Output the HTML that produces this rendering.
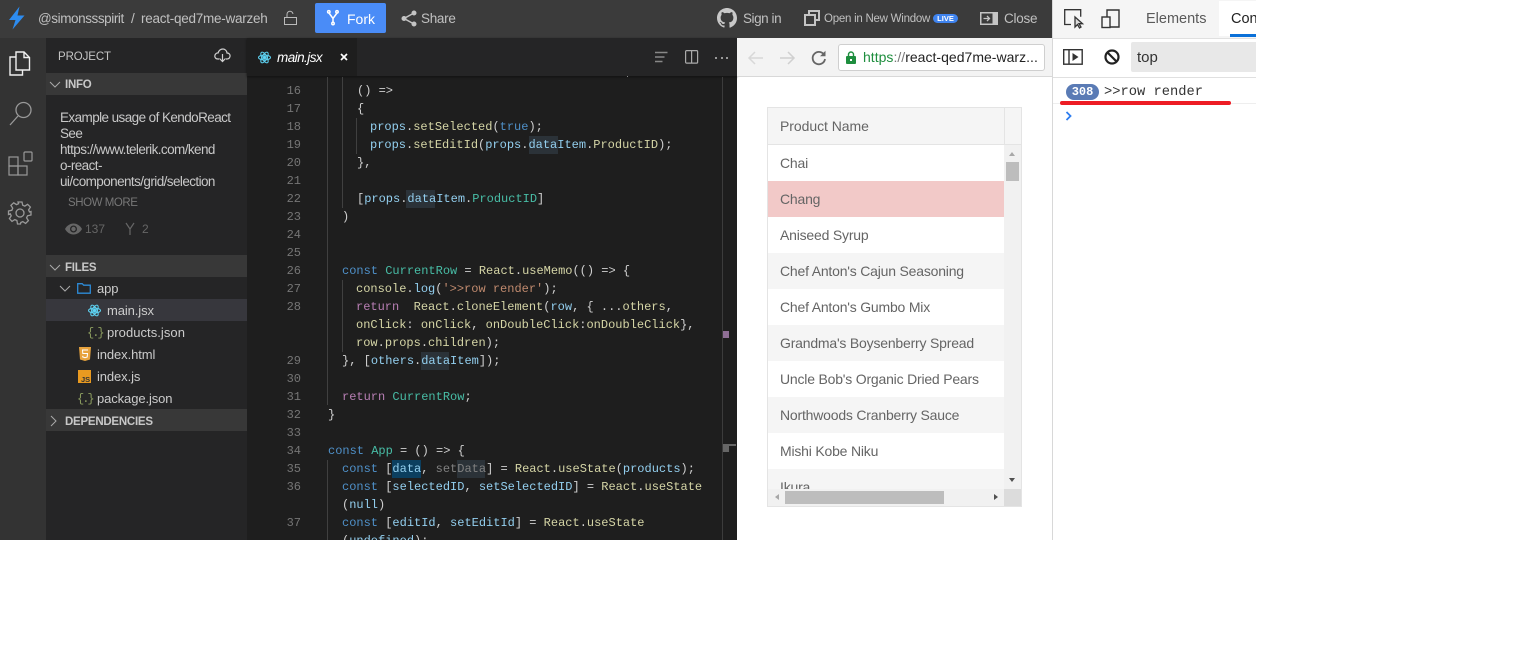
<!DOCTYPE html>
<html><head><meta charset="utf-8">
<style>
html,body{margin:0;padding:0;background:#fff;width:1536px;height:648px;overflow:hidden}
#r{position:relative;width:1536px;height:648px;overflow:hidden;font-family:"Liberation Sans",sans-serif}
.a{position:absolute;white-space:nowrap}
.h{top:0;height:38px;line-height:38px;color:#c0c0c0;font-size:13.5px;letter-spacing:-.2px}
.sb{left:46px;width:201px;height:22px;background:#383838}
.st{left:65px;color:#c8c8c8;font-size:11.5px;font-weight:bold;height:22px;line-height:22px;letter-spacing:-.25px}
.t{color:#cccccc;font-size:13px;line-height:22px;height:22px;letter-spacing:-.1px}
.d{left:60px;color:#c8c8c8;font-size:13.5px;line-height:16px;letter-spacing:-.58px}
.ln{left:247px;width:54px;text-align:right;font:12px/18px "Liberation Mono",monospace;color:#757575}
.c{font:12px/18px "Liberation Mono",monospace;color:#d0d0d0;white-space:pre;position:absolute}
.k{color:#4f90c8}.r{color:#b87fb4}.v{color:#93cfef}.f{color:#d5d5a6}.g{color:#48bda6}.s{color:#c08a6e}.b{color:#4f90c8}.u{color:#808080}
.w{background:#2b3238}
.row{left:768px;width:236px;height:36px;line-height:36px;color:#656565;font-size:14px;text-indent:12px;letter-spacing:-.2px}
.e{background:#f5f5f5}
.j{color:#8b9c5f;font:12px/22px "Liberation Mono",monospace;letter-spacing:-2px;height:22px}
svg{position:absolute;overflow:visible}
</style></head><body><div id="r">

<!-- top bar -->
<div class="a" style="left:0;top:0;width:1052px;height:38px;background:#3b3b3b"></div>
<svg style="left:8px;top:6px" width="18" height="24" viewBox="0 0 18 24"><path d="M11.5 .5 L1 14 L7.5 14 L4.5 23.5 L16.5 9.5 L9.5 9.5Z" fill="#2d8cf0"/></svg>
<div class="a h" style="left:38px;letter-spacing:-.42px">@simonssspirit</div>
<div class="a h" style="left:131px">/</div>
<div class="a h" style="left:141px;letter-spacing:-.25px">react-qed7me-warzeh</div>
<svg style="left:284px;top:11px" width="13" height="14" fill="none" stroke="#bbb" stroke-width="1"><rect x=".5" y="6.5" width="12" height="7"/><path d="M3 6.5V3.5a3 3 0 0 1 6-.5"/></svg>
<div class="a" style="left:315px;top:3px;width:71px;height:30px;background:#4a8cf7;border-radius:2px"></div>
<svg style="left:327px;top:10px" width="12" height="16" fill="none" stroke="#fff" stroke-width="1.5"><circle cx="1.8" cy="1.8" r="1.2"/><circle cx="10" cy="1.8" r="1.2"/><circle cx="6" cy="13.5" r="1.2"/><path d="M2 3l4 5.5 4-5.500M6 8.5v3.5"/></svg>
<div class="a h" style="left:347px;color:#fff;font-size:14px;letter-spacing:0">Fork</div>
<svg style="left:401px;top:10px" width="16" height="17" fill="#c4c4c4" stroke="#c4c4c4"><circle cx="13" cy="3" r="2"/><circle cx="13" cy="14" r="2"/><circle cx="3" cy="8.5" r="2"/><path d="M13 3L3 8.5 13 14" fill="none" stroke-width="1.5"/></svg>
<div class="a h" style="left:421px;letter-spacing:-.3px">Share</div>
<svg style="left:717px;top:8px" width="20" height="20" viewBox="0 0 16 16"><path fill="#c8c8c8" d="M8 0C3.58 0 0 3.58 0 8c0 3.54 2.29 6.53 5.47 7.59.4.07.55-.17.55-.38v-1.34c-2.23.48-2.7-1.08-2.7-1.08-.36-.93-.89-1.17-.89-1.17-.73-.5.05-.49.05-.49.8.06 1.23.83 1.23.83.71 1.22 1.87.87 2.33.66.07-.52.28-.87.51-1.07-1.78-.2-3.64-.89-3.64-3.95 0-.87.31-1.58.82-2.14-.08-.2-.36-1.02.08-2.12 0 0 .67-.21 2.2.82a7.6 7.6 0 0 1 4 0c1.53-1.04 2.2-.82 2.2-.82.44 1.1.16 1.92.08 2.12.51.56.82 1.27.82 2.14 0 3.07-1.87 3.75-3.65 3.95.29.25.54.74.54 1.5v2.22c0 .21.15.46.55.38A8 8 0 0 0 16 8c0-4.42-3.58-8-8-8z"/></svg>
<div class="a h" style="left:743px;letter-spacing:-.45px">Sign in</div>
<svg style="left:804px;top:10px" width="16" height="16" fill="none" stroke="#c4c4c4" stroke-width="2"><rect x="5" y="1" width="10" height="9"/><rect x="1" y="5" width="10" height="10" fill="#3b3b3b"/></svg>
<div class="a h" style="left:824px;font-size:11.5px;letter-spacing:-.25px">Open in New Window</div>
<div class="a" style="left:933px;top:14px;width:25px;height:9px;line-height:9px;border-radius:5px;background:#3f83ee;color:#fff;font-size:7.5px;font-weight:bold;text-align:center">LIVE</div>
<svg style="left:980px;top:12px" width="18" height="13"><rect width="18" height="13" fill="#c4c4c4"/><rect x="1.5" y="1.5" width="11" height="10" fill="#3b3b3b"/><path d="M3.5 6.5H9M7 4l2.5 2.5L7 9" fill="none" stroke="#c4c4c4" stroke-width="1.3"/></svg>
<div class="a h" style="left:1004px;letter-spacing:-.25px">Close</div>

<!-- activity bar -->
<div class="a" style="left:0;top:38px;width:46px;height:502px;background:#333"></div>
<svg style="left:9px;top:51px" width="22" height="25" fill="none" stroke="#f0f0f0" stroke-width="1.4"><path d="M7 1h8l5.500 5.500V19H7z"/><path d="M15 1v5.500h5.500"/><path d="M7 6H1v18h12.500v-5"/></svg>
<svg style="left:9px;top:101px" width="24" height="25" fill="none" stroke="#999" stroke-width="1.3"><circle cx="14.5" cy="9" r="7.5"/><path d="M9 15L1 24"/></svg>
<svg style="left:8px;top:151px" width="24" height="24" fill="none" stroke="#999" stroke-width="1.2"><rect x="1" y="6" width="9" height="9"/><rect x="1" y="15" width="9" height="9"/><rect x="10" y="15" width="9" height="9"/><rect x="16" y="1" width="8" height="9" rx="1"/></svg>
<svg style="left:8px;top:201px" width="24" height="24" viewBox="0 0 24 24" fill="none" stroke="#999" stroke-width="1.3"><circle cx="12" cy="12" r="4"/><path d="M10 1h4l.7 3.200 2.100.9 2.800-1.800 2.800 2.800-1.800 2.800.9 2.100L23 10.500v3.500l-3.500.8-.9 2 1.800 2.800-2.800 2.800-2.800-1.800-2 .9L12.500 23h-3l-.6-3.500-2.100-.9-2.800 1.800-2.600-2.800 1.800-2.800-.9-2L.5 13.500v-3.500l3.300-.7.9-2.100-1.800-2.800 2.800-2.600 2.800 1.800 2.100-.9z"/></svg>

<!-- sidebar -->
<div class="a" style="left:46px;top:38px;width:201px;height:502px;background:#252526"></div>
<div class="a" style="left:58px;top:49px;color:#c4c4c4;font-size:11.5px;line-height:16px;letter-spacing:-.1px">PROJECT</div>
<svg style="left:214px;top:48px" width="17" height="15" fill="none" stroke="#d0d0d0" stroke-width="1.2"><path d="M5 11H4C1 11 .5 8.500 1 7s2-2.300 3-2C5 2 7 1 9 1s4 2 4 4c2 0 3.500 1.500 3 3.500S14 11 13 11h-1"/><path d="M8.500 6v8M5.500 10.500l3 3 3-3"/></svg>
<div class="a sb" style="top:73px"></div>
<svg style="left:50px;top:82px" width="10" height="6" fill="none" stroke="#aaa"><path d="M0 0l5 5 5-5"/></svg>
<div class="a st" style="top:74px">INFO</div>
<div class="a d" style="top:110px">Example usage of KendoReact<br>See<br>https://www.telerik.com/kend<br>o-react-<br>ui/components/grid/selection</div>
<div class="a" style="left:68px;top:196px;color:#777;font-size:11.5px;line-height:14px;letter-spacing:-.45px">SHOW MORE</div>
<svg style="left:65px;top:223px" width="17" height="12" fill="#666"><path d="M0 6C2 2.500 5 .5 8.500 .5S15 2.500 17 6c-2 3.500-5 5.500-8.500 5.500S2 9.500 0 6z"/><circle cx="8.5" cy="6" r="3.5" fill="#252526"/><circle cx="8.5" cy="6" r="2.2"/></svg>
<div class="a" style="left:85px;top:221px;color:#666;font-size:12px;line-height:16px">137</div>
<svg style="left:125px;top:222px" width="10" height="14" fill="none" stroke="#666" stroke-width="1.2"><path d="M1 1l4 6 4-6M5 7v6"/></svg>
<div class="a" style="left:142px;top:221px;color:#666;font-size:12px;line-height:16px">2</div>

<div class="a sb" style="top:255px"></div>
<svg style="left:50px;top:265px" width="10" height="6" fill="none" stroke="#aaa"><path d="M0 0l5 5 5-5"/></svg>
<div class="a st" style="top:257px">FILES</div>
<svg style="left:60px;top:286px" width="10" height="6" fill="none" stroke="#aaa"><path d="M0 0l5 5 5-5"/></svg>
<svg style="left:77px;top:283px" width="14" height="11" fill="none" stroke="#2d8ad6" stroke-width="1.3"><path d="M.7 .7h4.500l1.500 1.500h6.600v8h-12.600z"/></svg>
<div class="a t" style="left:97px;top:278px">app</div>
<div class="a" style="left:46px;top:299px;width:201px;height:22px;background:#37373d"></div>
<svg style="left:88px;top:304px" width="13" height="13" viewBox="0 0 26 26" fill="none" stroke="#5ed3f3" stroke-width="2"><circle cx="13" cy="13" r="2.5" fill="#5ed3f3"/><ellipse cx="13" cy="13" rx="12" ry="5"/><ellipse cx="13" cy="13" rx="12" ry="5" transform="rotate(60 13 13)"/><ellipse cx="13" cy="13" rx="12" ry="5" transform="rotate(120 13 13)"/></svg>
<div class="a t" style="left:107px;top:300px">main.jsx</div>
<div class="a j" style="left:87px;top:322px">{.}</div>
<div class="a t" style="left:107px;top:322px;letter-spacing:.05px">products.json</div>
<svg style="left:79px;top:347px" width="12" height="14"><path d="M0 0h12l-1 12.500L6 14l-5-1.500z" fill="#e8a33d"/><path d="M9 3H3.500l.3 3.500H8.500l-.3 3.500-2.200.7-2.200-.7-.1-1.200" fill="none" stroke="#fff" stroke-width="1"/></svg>
<div class="a t" style="left:97px;top:344px">index.html</div>
<div class="a" style="left:78px;top:370px;width:13px;height:13px;background:#e99a20"></div>
<div class="a" style="left:81px;top:376px;color:#333;font-size:7.5px;font-weight:bold;line-height:8px">JS</div>
<div class="a t" style="left:97px;top:366px">index.js</div>
<div class="a j" style="left:77px;top:388px">{.}</div>
<div class="a t" style="left:97px;top:388px">package.json</div>
<div class="a sb" style="top:409px"></div>
<svg style="left:51px;top:416px" width="6" height="10" fill="none" stroke="#aaa"><path d="M0 0l5 5-5 5"/></svg>
<div class="a st" style="top:411px">DEPENDENCIES</div>

<!-- editor -->
<div class="a" style="left:247px;top:38px;width:490px;height:502px;background:#1e1e1e;overflow:hidden"></div>
<div class="a" style="left:247px;top:38px;width:490px;height:38px;background:#252526;box-shadow:0 1px 2px #111"></div>
<div class="a" style="left:247px;top:38px;width:110px;height:38px;background:#1e1e1e"></div>
<svg style="left:258px;top:51px" width="13" height="13" viewBox="0 0 26 26" fill="none" stroke="#5ed3f3" stroke-width="2"><circle cx="13" cy="13" r="2.5" fill="#5ed3f3"/><ellipse cx="13" cy="13" rx="12" ry="5"/><ellipse cx="13" cy="13" rx="12" ry="5" transform="rotate(60 13 13)"/><ellipse cx="13" cy="13" rx="12" ry="5" transform="rotate(120 13 13)"/></svg>
<div class="a" style="left:277px;top:49px;color:#fff;font-size:13.5px;font-style:italic;line-height:17px;letter-spacing:-.55px">main.jsx</div>
<svg style="left:340px;top:53px" width="8" height="8" stroke="#fff" stroke-width="1.7"><path d="M1 1l6 6M7 1l-6 6"/></svg>
<svg style="left:654px;top:51px" width="14" height="12" stroke="#888" stroke-width="1.5"><path d="M1 1.500h12.500M1 6h9.500M1 10.500h7.500"/></svg>
<svg style="left:685px;top:50px" width="14" height="14" fill="none" stroke="#aaa" stroke-width="1.2"><rect x=".6" y=".6" width="12" height="12.500" rx="1"/><path d="M6.600 .6v12.500"/></svg>
<div class="a" style="left:715px;top:57px;width:2px;height:2px;background:#999;box-shadow:6px 0 #999,11px 0 #999"></div>
<div class="a" style="left:627px;top:76px;width:1px;height:1px;background:#888"></div>

<!-- indent guides -->
<div class="a" style="left:327px;top:77px;width:1px;height:328px;background:#404040"></div>
<div class="a" style="left:327px;top:460px;width:1px;height:80px;background:#404040"></div>
<div class="a" style="left:342px;top:77px;width:1px;height:131px;background:#404040"></div>
<div class="a" style="left:356px;top:118px;width:1px;height:36px;background:#404040"></div>
<div class="a" style="left:342px;top:280px;width:1px;height:72px;background:#404040"></div>
<div class="a" style="left:722px;top:77px;width:1px;height:463px;background:#3c3c3c"></div>
<div class="a" style="left:723px;top:331px;width:6px;height:7px;background:#8f6f95"></div>
<div class="a" style="left:723px;top:444px;width:6px;height:8px;background:#666"></div>
<div class="a" style="left:729px;top:444px;width:7px;height:2px;background:#666"></div>

<!-- word highlights -->
<div class="a w" style="left:529px;top:136px;width:29px;height:18px"></div>
<div class="a w" style="left:406px;top:190px;width:29px;height:18px"></div>
<div class="a w" style="left:421px;top:352px;width:28px;height:18px"></div>
<div class="a" style="left:392px;top:460px;width:29px;height:18px;background:#0c3f5f"></div>
<div class="a w" style="left:457px;top:460px;width:28px;height:18px"></div>

<!-- line numbers -->
<div class="a ln" style="top:82px">16</div><div class="a ln" style="top:100px">17</div><div class="a ln" style="top:118px">18</div><div class="a ln" style="top:136px">19</div><div class="a ln" style="top:154px">20</div><div class="a ln" style="top:172px">21</div><div class="a ln" style="top:190px">22</div><div class="a ln" style="top:208px">23</div><div class="a ln" style="top:226px">24</div><div class="a ln" style="top:244px">25</div><div class="a ln" style="top:262px">26</div><div class="a ln" style="top:280px">27</div><div class="a ln" style="top:298px">28</div><div class="a ln" style="top:352px">29</div><div class="a ln" style="top:370px">30</div><div class="a ln" style="top:388px">31</div><div class="a ln" style="top:406px">32</div><div class="a ln" style="top:424px">33</div><div class="a ln" style="top:442px">34</div><div class="a ln" style="top:460px">35</div><div class="a ln" style="top:478px">36</div><div class="a ln" style="top:514px">37</div>

<!-- code -->
<div class="c" style="left:357px;top:82px">() =&gt;</div>
<div class="c" style="left:357px;top:100px">{</div>
<div class="c" style="left:370px;top:118px"><span class="v">props</span>.<span class="f">setSelected</span>(<span class="b">true</span>);</div>
<div class="c" style="left:370px;top:136px"><span class="v">props</span>.<span class="f">setEditId</span>(<span class="v">props</span>.<span class="v">dataItem</span>.<span class="f">ProductID</span>);</div>
<div class="c" style="left:357px;top:154px">},</div>
<div class="c" style="left:357px;top:190px">[<span class="v">props</span>.<span class="v">dataItem</span>.<span class="g">ProductID</span>]</div>
<div class="c" style="left:342px;top:208px">)</div>
<div class="c" style="left:342px;top:262px"><span class="k">const</span> <span class="g">CurrentRow</span> = <span class="f">React</span>.<span class="f">useMemo</span>(() =&gt; {</div>
<div class="c" style="left:356px;top:280px"><span class="f">console</span>.<span class="v">log</span>(<span class="s">'&gt;&gt;row render'</span>);</div>
<div class="c" style="left:356px;top:298px"><span class="r">return</span>  <span class="f">React</span>.<span class="f">cloneElement</span>(<span class="v">row</span>, { ...<span class="f">others</span>,</div>
<div class="c" style="left:356px;top:316px"><span class="f">onClick</span>: <span class="f">onClick</span>, <span class="f">onDoubleClick</span>:<span class="f">onDoubleClick</span>},</div>
<div class="c" style="left:356px;top:334px"><span class="f">row</span>.<span class="f">props</span>.<span class="f">children</span>);</div>
<div class="c" style="left:342px;top:352px">}, [<span class="v">others</span>.<span class="v">dataItem</span>]);</div>
<div class="c" style="left:342px;top:388px"><span class="r">return</span> <span class="g">CurrentRow</span>;</div>
<div class="c" style="left:328px;top:406px">}</div>
<div class="c" style="left:328px;top:442px"><span class="k">const</span> <span class="g">App</span> = () =&gt; {</div>
<div class="c" style="left:342px;top:460px"><span class="k">const</span> [<span class="v">data</span>, <span class="u">setData</span>] = <span class="f">React</span>.<span class="f">useState</span>(<span class="v">products</span>);</div>
<div class="c" style="left:342px;top:478px"><span class="k">const</span> [<span class="v">selectedID</span>, <span class="v">setSelectedID</span>] = <span class="f">React</span>.<span class="f">useState</span></div>
<div class="c" style="left:342px;top:496px">(<span class="v">null</span>)</div>
<div class="c" style="left:342px;top:514px"><span class="k">const</span> [<span class="v">editId</span>, <span class="v">setEditId</span>] = <span class="f">React</span>.<span class="f">useState</span></div>
<div class="a" style="left:342px;top:532px;height:8px;overflow:hidden"><div class="c" style="position:static">(<span class="v">undefined</span>);</div></div>

<!-- browser -->
<div class="a" style="left:737px;top:38px;width:315px;height:38px;background:#f3f3f3;border-bottom:1px solid #d8d8d8"></div>
<svg style="left:748px;top:51px" width="16" height="14" fill="none" stroke="#d8d8d8" stroke-width="1.5"><path d="M15 7H1.500M7 1L1 7l6 6"/></svg>
<svg style="left:779px;top:51px" width="16" height="14" fill="none" stroke="#d0d0d0" stroke-width="1.5"><path d="M1 7h13.500M9 1l6 6-6 6"/></svg>
<svg style="left:811px;top:50px" width="16" height="16" fill="none" stroke="#666" stroke-width="1.8"><path d="M13.500 5.500A6.200 6.200 0 1 0 14 9"/><path d="M14.500 .8v5.500H9" fill="#666" stroke="none"/></svg>
<div class="a" style="left:838px;top:44px;width:205px;height:25px;background:#fff;border:1px solid #cfcfcf;border-radius:3px"></div>
<svg style="left:846px;top:51px" width="11" height="13"><rect y="5" width="10" height="8" rx="1" fill="#1e8e3e"/><path d="M2.500 5V3.500a2.500 2.500 0 0 1 5 0V5" fill="none" stroke="#1e8e3e" stroke-width="1.4"/><rect x="4" y="8" width="2" height="2" fill="#fff"/></svg>
<div class="a" style="left:863px;top:49px;font-size:14px;line-height:17px;color:#222;letter-spacing:.02px"><span style="color:#1e8e3e">https</span><span style="color:#777">://</span>react-qed7me-warz...</div>

<!-- grid -->
<div class="a" style="left:767px;top:107px;width:253px;height:398px;border:1px solid #e4e4e4;background:#fff"></div>
<div class="a" style="left:768px;top:108px;width:253px;height:36px;background:#f5f5f5;border-bottom:1px solid #e4e4e4"></div>
<div class="a" style="left:1004px;top:108px;width:1px;height:36px;background:#e4e4e4"></div>
<div class="a" style="left:780px;top:108px;line-height:36px;color:#656565;font-size:14px;letter-spacing:-.05px">Product Name</div>
<div class="a row" style="top:145px">Chai</div>
<div class="a row" style="top:181px;background:#f2c9c8">Chang</div>
<div class="a row" style="top:217px">Aniseed Syrup</div>
<div class="a row e" style="top:253px">Chef Anton's Cajun Seasoning</div>
<div class="a row" style="top:289px">Chef Anton's Gumbo Mix</div>
<div class="a row e" style="top:325px">Grandma's Boysenberry Spread</div>
<div class="a row" style="top:361px">Uncle Bob's Organic Dried Pears</div>
<div class="a row e" style="top:397px">Northwoods Cranberry Sauce</div>
<div class="a row" style="top:433px">Mishi Kobe Niku</div>
<div class="a row e" style="top:469px;height:20px;overflow:hidden">Ikura</div>
<div class="a" style="left:1004px;top:145px;width:17px;height:344px;background:#f1f1f1"></div>
<div class="a" style="left:1006px;top:162px;width:13px;height:19px;background:#bdbdbd"></div>
<div class="a" style="left:1009px;top:152px;border:3px solid transparent;border-bottom:4px solid #a8a8a8;border-top:0"></div>
<div class="a" style="left:1009px;top:478px;border:3px solid transparent;border-top:4px solid #505050;border-bottom:0"></div>
<div class="a" style="left:768px;top:489px;width:236px;height:17px;background:#f1f1f1"></div>
<div class="a" style="left:1004px;top:489px;width:17px;height:17px;background:#dcdcdc"></div>
<div class="a" style="left:785px;top:491px;width:159px;height:13px;background:#bdbdbd"></div>
<div class="a" style="left:775px;top:494px;border:3px solid transparent;border-right:4px solid #a8a8a8;border-left:0"></div>
<div class="a" style="left:994px;top:494px;border:3px solid transparent;border-left:4px solid #505050;border-right:0"></div>

<!-- devtools -->
<div class="a" style="left:1052px;top:0;width:1px;height:540px;background:#d8d8d8"></div>
<div class="a" style="left:1053px;top:0;width:203px;height:540px;background:#fff"></div>
<div class="a" style="left:1053px;top:0;width:203px;height:38px;background:#f5f5f5;border-bottom:1px solid #e0e0e0"></div>
<div class="a" style="left:1219px;top:1px;width:37px;height:35px;background:#fff"></div>
<div class="a" style="left:1230px;top:34px;width:26px;height:3px;background:#0a70d8"></div>
<svg style="left:1064px;top:9px" width="21" height="20" fill="none" stroke="#333" stroke-width="1.3"><path d="M7 15.500H.7V.7h16v7"/><path d="M11 8l0 10 2.500-2.500 2 3.500 1.500-1-2-3.300h3.500z" fill="#ddd"/></svg>
<svg style="left:1101px;top:9px" width="20" height="20" fill="none" stroke="#333" stroke-width="1.4"><path d="M6 8V1h12v17H9"/><rect x="1" y="8" width="8" height="10.500"/></svg>
<div class="a" style="left:1146px;top:10px;color:#5a5a5a;font-size:14.5px;line-height:18px">Elements</div>
<div class="a" style="left:1231px;top:10px;color:#222;font-size:14.5px;line-height:18px;width:25px;overflow:hidden">Console</div>
<div class="a" style="left:1053px;top:39px;width:203px;height:38px;background:#fff;border-bottom:1px solid #e0e0e0"></div>
<svg style="left:1063px;top:49px" width="20" height="16" fill="none" stroke="#333" stroke-width="1.4"><rect x=".7" y=".7" width="18.500" height="14.500"/><path d="M6 .7v14.500"/><path d="M9.500 4l6 4-6 4z" fill="#333" stroke="none"/></svg>
<svg style="left:1104px;top:49px" width="16" height="16" fill="none" stroke="#222" stroke-width="2.2"><circle cx="8" cy="8" r="6.5"/><path d="M3.500 3.500l9 9"/></svg>
<div class="a" style="left:1131px;top:42px;width:125px;height:30px;background:#e8e8e8;border-radius:2px 0 0 2px"></div>
<div class="a" style="left:1137px;top:49px;color:#333;font-size:15px;line-height:18px">top</div>
<div class="a" style="left:1066px;top:84px;width:33px;height:16px;border-radius:8px;background:#5a7bb5;color:#fff;font:bold 12px/16px 'Liberation Mono',monospace;text-align:center">308</div>
<div class="a" style="left:1104px;top:84px;color:#333;font:13.75px/17px 'Liberation Mono',monospace">&gt;&gt;row render</div>
<div class="a" style="left:1053px;top:103px;width:203px;height:1px;background:#eee"></div>
<div class="a" style="left:1060px;top:101px;width:171px;height:4px;border-radius:2px;background:#ed1c24"></div>
<svg style="left:1065px;top:111px" width="8" height="10" fill="none" stroke="#2d7df0" stroke-width="1.8"><path d="M1.500 1l4 4-4 4"/></svg>
</div></body></html>
